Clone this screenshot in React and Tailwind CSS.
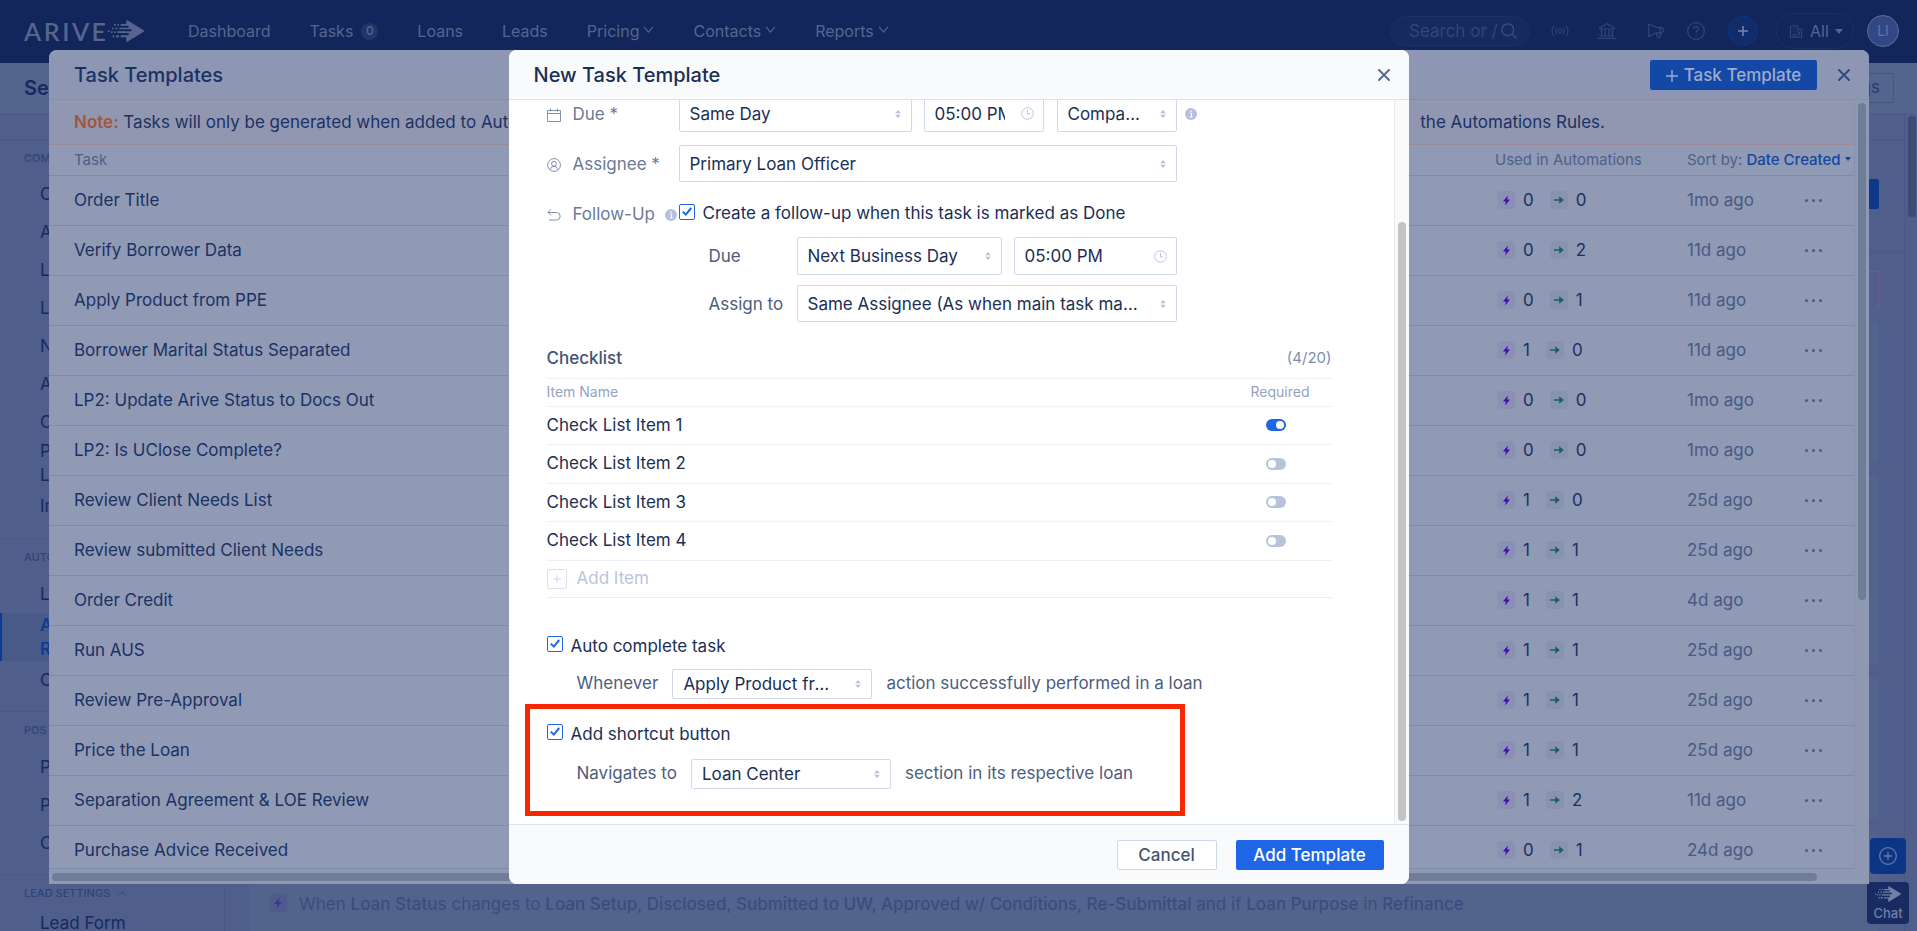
import React from "react";

const tasks = [
  ["Order Title", 0, 0, "1mo ago"],
  ["Verify Borrower Data", 0, 2, "11d ago"],
  ["Apply Product from PPE", 0, 1, "11d ago"],
  ["Borrower Marital Status Separated", 1, 0, "11d ago"],
  ["LP2: Update Arive Status to Docs Out", 0, 0, "1mo ago"],
  ["LP2: Is UClose Complete?", 0, 0, "1mo ago"],
  ["Review Client Needs List", 1, 0, "25d ago"],
  ["Review submitted Client Needs", 1, 1, "25d ago"],
  ["Order Credit", 1, 1, "4d ago"],
  ["Run AUS", 1, 1, "25d ago"],
  ["Review Pre-Approval", 1, 1, "25d ago"],
  ["Price the Loan", 1, 1, "25d ago"],
  ["Separation Agreement & LOE Review", 1, 2, "11d ago"],
  ["Purchase Advice Received", 0, 1, "24d ago"],
];

const navItems = [
  { label: "Dashboard" },
  { label: "Tasks", badge: "0" },
  { label: "Loans" },
  { label: "Leads" },
  { label: "Pricing", menu: true },
  { label: "Contacts", menu: true },
  { label: "Reports", menu: true },
];

function ArrowMark({ className }) {
  return (
    <svg viewBox="0 0 108 66" className={className} fill="currentColor" aria-hidden="true">
      <path d="M55 1 Q56 0 58 1 L107 31 Q109 33 107 35 L58 65 Q55 66 55 64 V52 H38 V46 H62 V39 H28 V34 H70 V28 H34 V23 H62 V17 H38 V12 H55 Z" />
      <rect x="18" y="12" width="5" height="5" />
      <rect x="28" y="12" width="5" height="5" />
      <rect x="12" y="23" width="5" height="5" />
      <rect x="22" y="23" width="6" height="5" />
      <rect x="0" y="31" width="5" height="5" />
      <rect x="9" y="34" width="5" height="5" />
      <rect x="18" y="34" width="5" height="5" />
      <rect x="14" y="46" width="5" height="6" />
      <rect x="24" y="46" width="9" height="6" />
    </svg>
  );
}

function Chevron({ up, className }) {
  return (
    <svg viewBox="0 0 12 8" className={className} fill="none" stroke="currentColor" strokeWidth="1.2" aria-hidden="true">
      <path d={up ? "M1 7 L6 1.5 L11 7" : "M1 1 L6 7 L11 1"} />
    </svg>
  );
}

function Sorter() {
  return (
    <svg viewBox="0 0 6 10" className="pointer-events-none absolute top-1/2 right-[11px] h-[10px] w-[6px] -translate-y-1/2" fill="#b5c1d8" aria-hidden="true">
      <path d="M3 1 L5.8 4.2 H0.2 Z M3 9 L5.8 5.8 H0.2 Z" />
    </svg>
  );
}

function Bolt({ className, fill }) {
  return (
    <svg viewBox="0 0 10 12" className={className} fill={fill} aria-hidden="true">
      <path d="M6.6 0.4 L1 7 H4.3 L3.4 11.6 L9 5 H5.7 Z" />
    </svg>
  );
}

function InfoDot() {
  return (
    <svg viewBox="0 0 12 12" className="h-3 w-3 shrink-0" aria-hidden="true">
      <circle cx="6" cy="6" r="6" fill="#b5c1da" />
      <circle cx="6" cy="3.3" r="0.8" fill="#fff" />
      <path d="M4.8 5.2 H6.4 V9 M4.8 9 H7.6" stroke="#fff" strokeWidth="1" fill="none" />
    </svg>
  );
}

function Close({ className }) {
  return (
    <svg viewBox="0 0 12 12" className={className} stroke="currentColor" strokeWidth="2" strokeLinecap="round" aria-hidden="true">
      <path d="M1 1 L11 11 M11 1 L1 11" />
    </svg>
  );
}

function Picker({ label, value, className, selectClass }) {
  return (
    <div className={"relative shrink-0 " + className}>
      <select
        aria-label={label}
        defaultValue={value}
        className={"h-full w-full appearance-none truncate rounded-[2px] border border-[#cfd9ea] bg-white pt-0.5 pl-[10px] text-[#1b2f54] " + (selectClass || "pr-8")}
      >
        <option>{value}</option>
      </select>
      <Sorter />
    </div>
  );
}

function TimeField({ label, className }) {
  return (
    <div className={"flex shrink-0 items-center rounded-[2px] border border-[#cfd9ea] bg-white pr-[9px] pl-[10px] " + className}>
      <input aria-label={label} defaultValue="05:00 PM" className="min-w-0 flex-1 bg-transparent pt-0.5 text-[#1b2f54] outline-none" />
      <svg viewBox="0 0 14 14" className="ml-4 h-[13px] w-[13px] shrink-0" fill="none" stroke="#b5c1d8" aria-hidden="true">
        <circle cx="7" cy="7" r="6.2" />
        <path d="M7 3 V7.5 H10" />
      </svg>
    </div>
  );
}

function Tick({ id }) {
  return (
    <span className="relative mb-1 flex h-4 w-4 shrink-0">
      <input id={id} type="checkbox" defaultChecked className="peer h-4 w-4 appearance-none rounded-[2px] border border-[#1e66e5] bg-white" />
      <svg viewBox="0 0 16 16" className="pointer-events-none absolute inset-0 hidden h-4 w-4 peer-checked:block" fill="none" stroke="#1e66e5" strokeWidth="2" aria-hidden="true">
        <path d="M3.8 7.6 L6.8 10.6 L12.2 4" />
      </svg>
    </span>
  );
}

function TopBar() {
  return (
    <header className="flex h-[63px] shrink-0 items-start bg-[#12265c] text-[#56658e]">
      <div className="flex h-[62px] items-center pl-6">
        <a href="#home" className="flex items-center" aria-label="Arive home">
          <span className="flex w-[82px] justify-between font-[Lato] text-[25px] leading-[30px] font-semibold">
            <span>A</span>
            <span>R</span>
            <span>I</span>
            <span>V</span>
            <span>E</span>
          </span>
          <ArrowMark className="ml-[2px] h-[22px] w-9" />
        </a>
      </div>
      <nav className="flex h-[62px] items-center gap-[39px] pl-11 text-base">
        {navItems.map((n) => (
          <a key={n.label} href={"#" + n.label.toLowerCase()} className="flex items-center">
            {n.label}
            {n.badge && (
              <span className="ml-2 flex h-[17px] w-[17px] items-center justify-center rounded-full bg-[#203668] text-xs font-medium">{n.badge}</span>
            )}
            {n.menu && <Chevron className="mb-1 ml-1 h-[7px] w-[11px]" />}
          </a>
        ))}
      </nav>
      <div className="ml-auto flex h-[62px] items-center pr-[18px] text-[#33457a]">
        <label className="flex h-[30px] w-[140px] items-center rounded-full border border-[#1d3166] bg-[#162a5f] pr-3 pl-[18px]">
          <input aria-label="Search" placeholder="Search or /" className="w-[92px] min-w-0 bg-transparent pt-0.5 text-[17px] outline-none placeholder:text-[#33457a]" />
          <svg viewBox="0 0 16 16" className="h-4 w-4 shrink-0" fill="none" stroke="#3d4f82" strokeWidth="1.3" aria-hidden="true">
            <circle cx="6.7" cy="6.7" r="5.9" />
            <path d="M11 11 L15.5 15.5" />
          </svg>
        </label>
        <button aria-label="Broadcast" className="ml-[21px]">
          <svg viewBox="0 0 18 14" className="h-[14px] w-[18px]" fill="none" stroke="currentColor">
            <circle cx="9" cy="7" r="2" />
            <path d="M5.6 3.4 Q3.4 7 5.6 10.6 M12.4 3.4 Q14.6 7 12.4 10.6 M3 1.5 Q-1 7 3 12.5 M15 1.5 Q19 7 15 12.5" />
          </svg>
        </button>
        <button aria-label="Lenders" className="ml-[29px]">
          <svg viewBox="0 0 18 16" className="h-4 w-[18px]" fill="none" stroke="currentColor" strokeWidth="1.2">
            <path d="M1.5 5 L9 0.8 L16.5 5 V6 H1.5 Z M3.5 6 V13 M7 6 V13 M11 6 V13 M14.5 6 V13 M1.5 13 H16.5 M0 15.3 H18" />
          </svg>
        </button>
        <button aria-label="Announcements" className="ml-8">
          <svg viewBox="0 0 16 16" className="h-4 w-4" fill="none" stroke="currentColor" strokeWidth="1.2">
            <path d="M0.8 1 V13.5 L8.5 9.8 M0.8 1 L8.5 4.3 H12.5 Q15.3 4.6 15.3 7 Q15.3 9.5 12.5 9.8 H8.5 M12 4.3 V9.8 M8.8 10 V12.5 Q9 14.6 10.8 14.6 Q12.4 14.4 12.4 12.5 V10" />
          </svg>
        </button>
        <button aria-label="Help" className="ml-[23px]">
          <svg viewBox="0 0 18 18" className="h-[18px] w-[18px]" fill="none" stroke="currentColor" strokeWidth="1.2">
            <circle cx="9" cy="9" r="8.3" />
            <path d="M6.5 7 Q6.6 4.6 9 4.6 Q11.5 4.7 11.5 6.8 Q11.4 8.3 9.9 8.9 Q9 9.4 9 11 M9 12.3 V13.6" />
          </svg>
        </button>
        <button aria-label="Create" className="ml-[23px] flex h-[30px] w-[30px] items-center justify-center rounded-full border border-[#0e357f] bg-[#112c6b] text-[#7583a6]">
          <svg viewBox="0 0 10 10" className="h-[10px] w-[10px]" stroke="currentColor" strokeWidth="1.6">
            <path d="M5 0 V10 M0 5 H10" />
          </svg>
        </button>
        <button className="ml-[18px] flex h-9 w-[78px] items-center rounded-full border border-[#1d3166] pl-3 text-base text-[#56658e]">
          <svg viewBox="0 0 14 13" className="mr-[7px] h-[13px] w-[14px] text-[#33457a]" fill="none" stroke="currentColor">
            <path d="M1.5 12 V1 H9 V12 M9 4.5 H12.5 V12 M0 12.3 H14 M4 3.5 H5 M6 3.5 H7 M4 6 H5 M6 6 H7 M4 12 V9 H6.5 V12 M10.5 7 V10" />
          </svg>
          All
          <svg viewBox="0 0 8 5" className="ml-[6px] h-[5px] w-2" fill="currentColor">
            <path d="M0 0 H8 L4 5 Z" />
          </svg>
        </button>
        <button className="ml-[13px] flex h-8 w-8 items-center justify-center rounded-full border border-[#5d6c99] bg-[#324785] text-sm text-[#65749f]">LI</button>
      </div>
    </header>
  );
}

function SideLink({ children, className }) {
  return (
    <a href="#settings" className={"block pl-10 leading-6 " + (className || "mb-[14px]")}>
      {children}
    </a>
  );
}

function Sidebar() {
  return (
    <aside className="w-[225px] shrink-0 border-r border-[#495886] text-[17px] text-[#152a62]">
      <section className="border-b border-[#495886] pb-5">
        <h2 className="pt-[9px] pb-[15px] pl-6 text-[11px] leading-[18px] font-medium text-[#304378]">COMPANY</h2>
        <SideLink>Company Info</SideLink>
        <SideLink>Account Settings</SideLink>
        <SideLink>Licenses</SideLink>
        <SideLink>Locations</SideLink>
        <SideLink>Notifications</SideLink>
        <SideLink>Affiliates</SideLink>
        <SideLink className="mb-[5px]">Compensation</SideLink>
        <SideLink className="mb-[7px]">
          Product &amp;<br />
          Lenders
        </SideLink>
        <SideLink className="mb-0">Integrations</SideLink>
      </section>
      <section className="border-b border-[#495886] pb-[19px]">
        <h2 className="pt-[9px] pb-4 pl-6 text-[11px] leading-[18px] font-medium text-[#304378]">AUTOMATIONS</h2>
        <SideLink className="mb-[7px]">Loan Stages</SideLink>
        <a href="#rules" className="mb-[7px] block border-l-2 border-[#0b3a97] bg-[#485a88] pl-[38px] leading-6 font-semibold text-[#0e3a92]">
          Automation<br />
          Rules
        </a>
        <SideLink className="mb-0">Checklists</SideLink>
      </section>
      <section className="border-b border-[#495886] pb-[19px]">
        <h2 className="pt-[9px] pb-4 pl-6 text-[11px] leading-[18px] font-medium text-[#304378]">POS</h2>
        <SideLink>Portal</SideLink>
        <SideLink>Profile</SideLink>
        <SideLink className="mb-0">Consents</SideLink>
      </section>
      <section>
        <h2 className="flex items-center pt-[9px] pb-[9px] pl-6 text-[11px] leading-[18px] font-medium text-[#304378]">
          LEAD SETTINGS <Chevron up className="ml-2 h-[5px] w-2" />
        </h2>
        <SideLink>Lead Form</SideLink>
      </section>
    </aside>
  );
}

function RulesPage() {
  return (
    <main className="flex min-w-0 flex-1 flex-col pr-[25px] pl-6">
      <div className="-mr-[25px] -ml-6 flex h-28 shrink-0 items-end justify-end border-b border-[#495886] pr-[25px] pb-[42px]">
        <button className="h-[30px] w-40 rounded-[2px] bg-[#0d3789] text-[#7583a6]">Add Rule</button>
      </div>
      <div className="mt-[19px] h-10 shrink-0 rounded-[2px] border border-[#6a618a]" />
      <div className="mt-[10px] h-[142px] shrink-0 rounded bg-[#53648c]" />
      <div className="mt-[13px] h-[189px] shrink-0 rounded bg-[#53648c]" />
      <div className="mt-3 h-[142px] shrink-0 rounded bg-[#53648c]" />
      <article className="mt-3 flex h-36 shrink-0 items-start rounded bg-[#53648c] pt-[61px] pl-5 text-[17px] leading-6 text-[#3b4c80]">
        <span className="mt-[2px] mr-3 flex h-[18px] w-[18px] items-center justify-center rounded bg-[#4e5b8b]">
          <Bolt className="h-3 w-[10px]" fill="#3f369c" />
        </span>
        <p className="whitespace-nowrap">
          When <b className="font-medium">Loan Status</b> changes to <b className="font-medium">Loan Setup, Disclosed, Submitted to UW, Approved w/ Conditions, Re-Submittal</b> and if{" "}
          <b className="font-medium">Loan Purpose</b> in <b className="font-medium">Refinance</b>
        </p>
      </article>
    </main>
  );
}

function TemplatesDialog() {
  return (
    <section role="dialog" aria-label="Task Templates" className="flex h-full flex-1 flex-col overflow-hidden rounded-t-lg bg-[#909ab4] text-[17px] text-[#1b3164]">
      <header className="flex h-[50px] shrink-0 items-center border-b border-[#978a9d] bg-[#8d97b3] pr-[19px] pl-[25px]">
        <h2 className="flex-1 text-xl font-medium">Task Templates</h2>
        <button className="flex h-[30px] w-[167px] items-center justify-center rounded-[2px] bg-[#1348a6] pt-0.5 font-medium text-[#9daccb]">
          <svg viewBox="0 0 12 12" className="mr-[6px] h-3 w-3" stroke="currentColor" strokeWidth="1.4" aria-hidden="true">
            <path d="M6 0 V12 M0 6 H12" />
          </svg>
          Task Template
        </button>
        <button aria-label="Close" className="ml-[21px] text-[#34487a]">
          <Close className="h-3 w-3" />
        </button>
      </header>
      <div className="flex min-h-0 flex-1">
        <div className="min-w-0 flex-1 overflow-hidden border-b border-[#808bab]">
          <div className="flex h-[45px] items-center justify-between border-b border-[#9c8a9a] bg-[#9197b1] pt-0.5 pr-[249px] pl-[25px]">
            <p>
              <strong className="font-semibold text-[#a1563f]">Note:</strong> Tasks will only be generated when added to Automations.
            </p>
            <p>the Automations Rules.</p>
          </div>
          <table className="w-full table-fixed border-collapse text-left">
            <colgroup>
              <col />
              <col className="w-[192px]" />
              <col className="w-[114px]" />
              <col className="w-[53px]" />
            </colgroup>
            <thead>
              <tr className="h-[30px] border-b border-[#808bab] text-[15px] text-[#4f6089]">
                <th className="pl-[25px] font-normal">Task</th>
                <th className="font-normal">Used in Automations</th>
                <th colSpan={2} className="font-normal whitespace-nowrap">
                  Sort by:{" "}
                  <button className="font-medium text-[#1545a0]">
                    Date Created
                    <svg viewBox="0 0 6 4" className="mb-[2px] ml-1 inline h-1 w-[6px]" fill="currentColor" aria-hidden="true">
                      <path d="M0 0 H6 L3 4 Z" />
                    </svg>
                  </button>
                </th>
              </tr>
            </thead>
            <tbody>
              {tasks.map(([name, rules, moves, age]) => (
                <tr key={name} className="h-[50px] border-b border-[#808bab] leading-6">
                  <td className="pl-[25px]">{name}</td>
                  <td>
                    <div className="flex items-center pl-[2px]">
                      <span className="mr-2 flex h-[18px] w-[18px] items-center justify-center rounded bg-[#8b90b4]">
                        <Bolt className="h-[11px] w-[9px]" fill="#3d10ae" />
                      </span>
                      {rules}
                      <span className="mr-2 ml-4 flex h-[18px] w-[18px] items-center justify-center rounded bg-[#8893af]">
                        <svg viewBox="0 0 10 8" className="h-2 w-[10px]" aria-hidden="true">
                          <path d="M0 3.2 H6 V4.8 H0 Z M5.2 0.2 L9.8 4 L5.2 7.8 Z" fill="#195f66" />
                        </svg>
                      </span>
                      {moves}
                    </div>
                  </td>
                  <td className="text-[#475984]">{age}</td>
                  <td>
                    <button aria-label={"More for " + name} className="ml-1 flex gap-1">
                      <i className="h-[3px] w-[3px] rounded-full bg-[#4a5b87]" />
                      <i className="h-[3px] w-[3px] rounded-full bg-[#4a5b87]" />
                      <i className="h-[3px] w-[3px] rounded-full bg-[#4a5b87]" />
                    </button>
                  </td>
                </tr>
              ))}
            </tbody>
          </table>
        </div>
        <div className="w-[15px] shrink-0 border-l border-[#8590ae] bg-[#8f99b3] pt-[3px] pl-[3px]">
          <div className="h-[497px] w-2 rounded-full bg-[#707d99]" />
        </div>
      </div>
      <div className="h-[15px] shrink-0 bg-[#8f99b3] pt-1 pr-[52px] pl-[3px]">
        <div className="h-2 rounded-full bg-[#707d99]" />
      </div>
    </section>
  );
}

function FieldLabel({ icon, children }) {
  return (
    <div className="flex w-[132px] shrink-0 items-center pt-0.5 text-[#6b7a98]">
      <svg viewBox="0 0 14 14" className="mr-3 h-[14px] w-[14px] shrink-0" fill="none" stroke="#7f8fb0" aria-hidden="true">
        {icon}
      </svg>
      {children}
    </div>
  );
}

function NewTemplateDialog() {
  return (
    <section role="dialog" aria-label="New Task Template" className="flex h-full w-[900px] flex-col overflow-hidden rounded-lg bg-white text-[17px] text-[#1b2f54]">
      <header className="flex h-[50px] shrink-0 items-center justify-between border-b border-[#dfe5ef] bg-[#f9fafc] pr-[19px] pl-[25px]">
        <h2 className="text-xl font-medium">New Task Template</h2>
        <button aria-label="Close" className="text-[#5a6c8e]">
          <Close className="h-3 w-3" />
        </button>
      </header>
      <div className="flex min-h-0 flex-1">
        <form className="min-w-0 flex-1 overflow-hidden pr-[62px] pl-[38px]">
          <div className="-mt-[5px] flex h-[37px] items-center">
            <FieldLabel icon={<path d="M0.5 2.5 H13.5 V13.5 H0.5 Z M0.5 5.5 H13.5 M3.5 0.5 V3.5 M10.5 0.5 V3.5" />}>Due *</FieldLabel>
            <Picker label="Due day" value="Same Day" className="h-[37px] w-[233px]" />
            <TimeField label="Due time" className="ml-3 h-[37px] w-[120px]" />
            <Picker label="Time zone" value="Company Time Zone" className="mr-2 ml-[13px] h-[37px] w-[120px]" selectClass="pr-[30px]" />
            <InfoDot />
          </div>
          <div className="mt-[13px] flex h-[37px] items-center">
            <FieldLabel
              icon={
                <g>
                  <circle cx="7" cy="7" r="6.4" />
                  <circle cx="7" cy="5.8" r="2.4" />
                  <path d="M3.6 11.6 Q3.6 8.2 7 8.3 Q10.4 8.2 10.4 11.6" />
                </g>
              }
            >
              Assignee *
            </FieldLabel>
            <Picker label="Assignee" value="Primary Loan Officer" className="h-[37px] w-[498px]" />
          </div>
          <div className="mt-[20px] flex h-6 items-center">
            <FieldLabel icon={<path d="M4 1.5 L1 4.5 L4 7.5 M1 4.5 H9.5 Q13.2 4.5 13.2 8.2 Q13.2 12 9.5 12 H2" />}>
              <span className="flex-1">Follow-Up</span>
              <span className="mr-[2px]">
                <InfoDot />
              </span>
            </FieldLabel>
            <Tick id="follow" />
            <label htmlFor="follow" className="ml-2">
              Create a follow-up when this task is marked as Done
            </label>
          </div>
          <div className="mt-[11px] ml-[162px] flex h-[38px] items-center text-[#4c5d7e]">
            <span className="w-[88px] pt-0.5">Due</span>
            <Picker label="Follow-up due day" value="Next Business Day" className="h-[38px] w-[205px]" />
            <TimeField label="Follow-up due time" className="ml-3 h-[38px] w-[163px]" />
          </div>
          <div className="mt-[10px] ml-[162px] flex h-[37px] items-center text-[#4c5d7e]">
            <span className="w-[88px] pt-0.5">Assign to</span>
            <Picker label="Follow-up assignee" value="Same Assignee (As when main task marked as done)" className="h-[37px] w-[380px]" />
          </div>

          <table className="mt-[23px] w-full table-fixed border-collapse text-left">
            <colgroup>
              <col />
              <col className="w-[81px]" />
            </colgroup>
            <thead>
              <tr className="h-[33px] border-b border-[#eef1f6] leading-6">
                <th className="pb-[6px] font-medium text-[#44546f]">Checklist</th>
                <td className="pb-[6px] text-right text-[15px] text-[#7d8dac]">(4/20)</td>
              </tr>
              <tr className="h-7 border-b border-[#eef1f6] text-sm text-[#94a3c0]">
                <th className="font-normal">Item Name</th>
                <th className="font-normal">Required</th>
              </tr>
            </thead>
            <tbody>
              {[1, 2, 3, 4].map((n) => (
                <tr key={n} className="border-b border-[#eef1f6] odd:h-[38px] even:h-[39px]">
                  <td className="pt-px">Check List Item {n}</td>
                  <td>
                    <input
                      type="checkbox"
                      role="switch"
                      aria-label={"Check List Item " + n + " required"}
                      defaultChecked={n === 1}
                      className="ml-[15px] flex h-3 w-5 appearance-none items-center rounded-full bg-[#b7c3d9] px-[2px] before:h-2 before:w-2 before:rounded-full before:bg-white checked:justify-end checked:bg-[#1e66e5]"
                    />
                  </td>
                </tr>
              ))}
            </tbody>
          </table>
          <div className="flex h-[37px] items-center border-b border-[#eaeff6]">
            <button type="button" className="flex items-center text-[#b9c5db]">
              <span className="mr-[10px] flex h-5 w-5 items-center justify-center rounded-[2px] border border-[#dbe2ee]">
                <svg viewBox="0 0 8 8" className="h-2 w-2" stroke="#dbe2ee" strokeWidth="1.4" aria-hidden="true">
                  <path d="M4 0 V8 M0 4 H8" />
                </svg>
              </span>
              Add Item
            </button>
          </div>

          <div className="mt-9 flex h-6 items-center">
            <Tick id="auto" />
            <label htmlFor="auto" className="ml-2 pt-0.5">
              Auto complete task
            </label>
          </div>
          <div className="mt-[11px] ml-[30px] flex h-[30px] items-center text-[#4c5d7e]">
            Whenever
            <Picker label="Action" value="Apply Product from PPE" className="mx-[14px] h-[30px] w-[200px]" selectClass="pr-10" />
            action successfully performed in a loan
          </div>

          <div className="relative mt-[23px]">
            <div className="pointer-events-none absolute -top-[18px] -left-[22px] h-28 w-[660px] border-[5px] border-[#f92600]" />
            <div className="flex h-6 items-center">
              <Tick id="shortcut" />
              <label htmlFor="shortcut" className="ml-2 pt-0.5">
                Add shortcut button
              </label>
            </div>
            <div className="mt-[13px] ml-[30px] flex h-[30px] items-center text-[#4c5d7e]">
              Navigates to
              <Picker label="Loan section" value="Loan Center" className="mx-[14px] h-[30px] w-[200px]" />
              section in its respective loan
            </div>
          </div>
        </form>
        <div className="flex w-[15px] shrink-0 flex-col justify-end border-l border-[#e8e8e8] bg-[#fafafa] pb-[3px] pl-[3px]">
          <div className="h-[599px] w-2 rounded-full bg-[#c4c4c4]" />
        </div>
      </div>
      <footer className="flex h-[60px] shrink-0 items-center justify-end border-t border-[#dfe5ef] bg-[#f9fafc] pr-[25px] font-medium">
        <button className="h-[30px] w-[100px] rounded-[2px] border border-[#cfd9ea] bg-white pt-0.5 text-[#44546f]">Cancel</button>
        <button className="ml-[19px] h-[30px] w-[148px] rounded-[2px] bg-[#1e66e5] pt-0.5 text-white">Add Template</button>
      </footer>
    </section>
  );
}

export default function App() {
  return (
    <div className="relative flex h-screen flex-col overflow-hidden bg-[#4f5e8b] font-[Inter,sans-serif]">
      <TopBar />
      <div className="flex h-[50px] shrink-0 items-center justify-between bg-[#53658d] pr-[23px] pl-6 text-[#142961]">
        <h1 className="text-xl font-semibold">Settings</h1>
        <button className="h-[30px] w-40 rounded-[2px] border border-[#45567f] pr-[13px] text-right text-[17px] text-[#253970]">Add Settings</button>
      </div>
      <div className="flex min-h-0 flex-1">
        <div className="flex min-w-0 flex-1 flex-col">
          <div className="h-[27px] shrink-0 border-b border-[#495886] bg-gradient-to-b from-[#4b5a87] to-[#505f8c] to-20%" />
          <div className="flex min-h-0 flex-1">
            <Sidebar />
            <RulesPage />
          </div>
        </div>
        <div className="w-[13px] shrink-0 border-l border-[#495886] pt-[3px] pl-[3px]">
          <div className="h-[101px] w-2 rounded-full bg-[#3d4a72]" />
        </div>
      </div>

      <div className="absolute right-2 bottom-[7px] flex flex-col items-center gap-2">
        <button aria-label="Add" className="flex h-9 w-9 items-center justify-center rounded bg-[#0c3585] text-[#6a7aa3]">
          <svg viewBox="0 0 18 18" className="h-[18px] w-[18px]" fill="none" stroke="currentColor" strokeWidth="1.3">
            <circle cx="9" cy="9" r="8.3" />
            <path d="M9 5 V13 M5 9 H13" />
          </svg>
        </button>
        <button className="flex h-[42px] w-[42px] flex-col items-center rounded bg-[#182b62] pt-1 text-[13px] font-medium text-[#7280a5]">
          <ArrowMark className="h-4 w-[26px]" />
          <span className="mt-[3px] leading-4">Chat</span>
        </button>
      </div>

      <div className="absolute inset-0 flex pt-[50px] pr-12 pb-[47px] pl-[49px]">
        <TemplatesDialog />
      </div>
      <div className="absolute inset-0 flex justify-center pt-[50px] pb-[47px]">
        <NewTemplateDialog />
      </div>
    </div>
  );
}
